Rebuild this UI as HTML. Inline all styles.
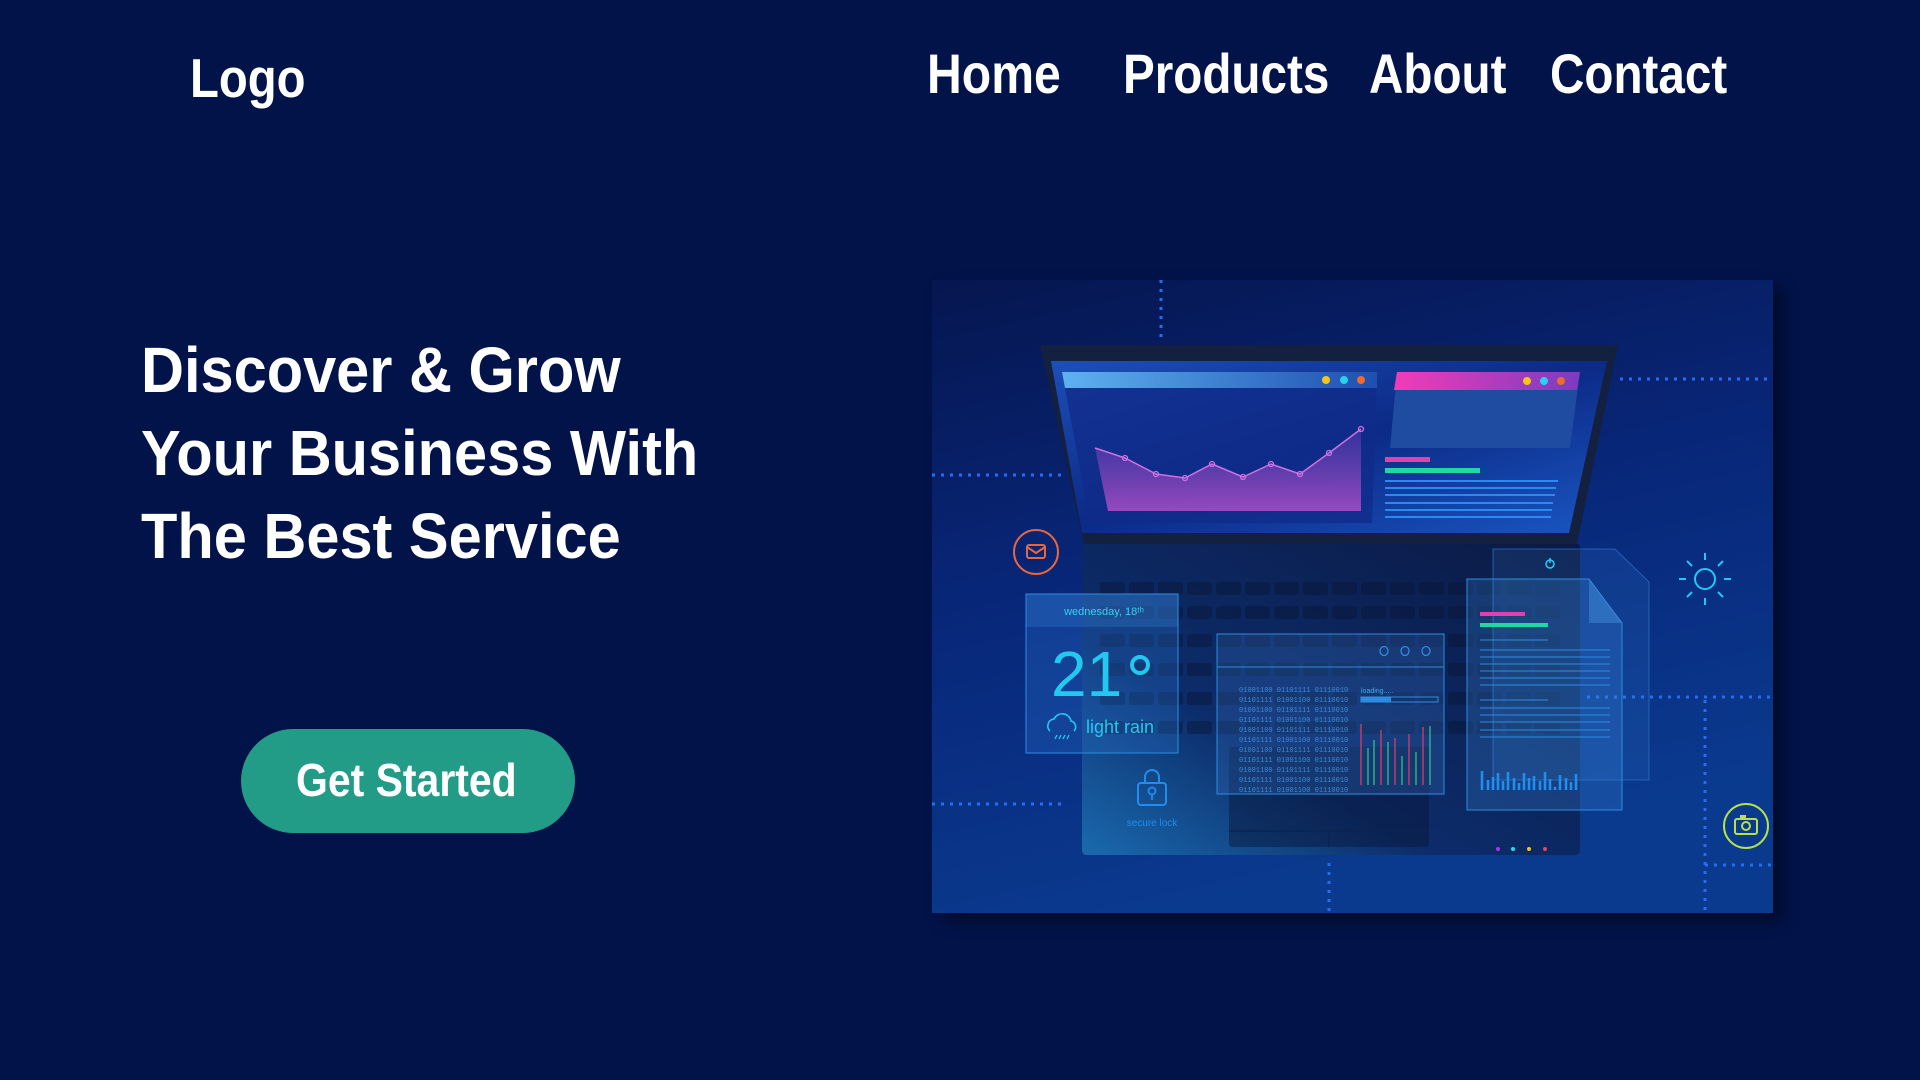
<!DOCTYPE html>
<html><head><meta charset="utf-8"><style>
html,body{margin:0;padding:0;width:1920px;height:1080px;overflow:hidden;background:#02134a;font-family:"Liberation Sans",sans-serif;color:#fff}
.t{position:absolute;white-space:nowrap;font-weight:bold;line-height:1;transform-origin:0 0}
.btn{position:absolute;left:241px;top:729px;width:334px;height:104px;border-radius:52px;background:#239c87}
</style></head><body>
<div class="t" style="left:190px;top:51px;font-size:55px;transform:scaleX(.86)">Logo</div>
<div class="t" style="left:927px;top:46px;font-size:56px;transform:scaleX(.86)">Home</div>
<div class="t" style="left:1123px;top:46px;font-size:56px;transform:scaleX(.85)">Products</div>
<div class="t" style="left:1369px;top:46px;font-size:56px;transform:scaleX(.85)">About</div>
<div class="t" style="left:1550px;top:46px;font-size:56px;transform:scaleX(.85)">Contact</div>
<div class="t" style="left:141px;top:338px;font-size:64px;transform:scaleX(.93)">Discover &amp; Grow</div>
<div class="t" style="left:141px;top:421px;font-size:64px;transform:scaleX(.93)">Your Business With</div>
<div class="t" style="left:141px;top:504px;font-size:64px;transform:scaleX(.93)">The Best Service</div>
<div class="btn"></div>
<div class="t" style="left:296px;top:757px;font-size:46px;transform:scaleX(.89)">Get Started</div>

<svg style="position:absolute;left:932px;top:280px;filter:drop-shadow(10px 8px 8px rgba(0,0,0,.45))" width="841" height="633" viewBox="0 0 841 633" font-family="Liberation Sans, sans-serif">
<defs>
<linearGradient id="bg" x1="0" y1="0" x2="0.3" y2="1"><stop offset="0" stop-color="#061650"/><stop offset=".5" stop-color="#08277a"/><stop offset="1" stop-color="#0a3a8e"/></linearGradient>
<linearGradient id="scr" x1="0" y1="0" x2="1" y2="1"><stop offset="0" stop-color="#1d4fb8"/><stop offset=".5" stop-color="#0c2a86"/><stop offset="1" stop-color="#1a56c2"/></linearGradient>
<linearGradient id="chart" x1="0" y1="0" x2="0" y2="1"><stop offset="0" stop-color="#5a3cb0" stop-opacity=".5"/><stop offset="1" stop-color="#b04ec8" stop-opacity=".85"/></linearGradient>
<linearGradient id="base" x1="0" y1="1" x2="1" y2="0"><stop offset="0" stop-color="#1a6aae"/><stop offset=".35" stop-color="#0c2c6a"/><stop offset="1" stop-color="#0b1a45"/></linearGradient>
<linearGradient id="hd1" x1="0" y1="0" x2="1" y2="0"><stop offset="0" stop-color="#5eb2f0"/><stop offset="1" stop-color="#1f4fb0"/></linearGradient>
<linearGradient id="hd2" x1="0" y1="0" x2="1" y2="0"><stop offset="0" stop-color="#f23cb8"/><stop offset="1" stop-color="#7a3cc0"/></linearGradient>
</defs>
<rect width="841" height="633" fill="url(#bg)"/>
<g stroke="#2a6cf0" stroke-width="3" stroke-dasharray="3 6" fill="none">
<path d="M688 99H841M0 195H135M655 417H841M0 524H135M773 585H841M229 0V63M773 420V633M397 583V633"/>
</g>
<path d="M108 65H686L645 264H152Z" fill="#142040"/>
<path d="M119 81H675L637 253H150Z" fill="url(#scr)"/>
<path d="M130 92H445L440 243H158Z" fill="#102c8a" opacity=".8"/>
<path d="M130 92H445V108H133Z" fill="url(#hd1)"/>
<circle cx="394" cy="100" r="4" fill="#f5c518"/><circle cx="412" cy="100" r="4" fill="#2ad0f0"/><circle cx="429" cy="100" r="4" fill="#f06a2a"/>
<path d="M163 168L193 178L224 194L253 198L280 184L311 197L339 184L368 194L397 173L429 149V231H176Z" fill="url(#chart)"/>
<polyline points="163,168 193,178 224,194 253,198 280,184 311,197 339,184 368,194 397,173 429,149" fill="none" stroke="#d070e0" stroke-width="1.5"/>
<g fill="none" stroke="#d070e0" stroke-width="1.3"><circle cx="193" cy="178" r="2.5"/><circle cx="224" cy="194" r="2.5"/><circle cx="253" cy="198" r="2.5"/><circle cx="280" cy="184" r="2.5"/><circle cx="311" cy="197" r="2.5"/><circle cx="339" cy="184" r="2.5"/><circle cx="368" cy="194" r="2.5"/><circle cx="397" cy="173" r="2.5"/><circle cx="429" cy="149" r="2.5"/></g>
<path d="M465 92H648L638 168H458Z" fill="#1f4ba0"/>
<path d="M465 92H648L645 110H462Z" fill="url(#hd2)"/>
<circle cx="595" cy="101" r="4" fill="#f5c518"/><circle cx="612" cy="101" r="4" fill="#2ad0f0"/><circle cx="629" cy="101" r="4" fill="#f06a2a"/>
<rect x="453" y="177" width="45" height="5" fill="#e040b0"/><rect x="453" y="188" width="95" height="5" fill="#20d8a0"/>
<g stroke="#2a8af0" stroke-width="2"><path d="M453 201H626M453 208H624M453 215H623M453 223H621M453 230H620M453 237H619"/></g>
<path d="M152 264H645Q648 264 648 268V570Q648 575 643 575H155Q150 575 150 570V268Z" fill="url(#base)"/>
<g fill="#081636" opacity=".45">
<g id="row"><rect x="168" y="302" width="25" height="13" rx="3"/><rect x="197" y="302" width="25" height="13" rx="3"/><rect x="226" y="302" width="25" height="13" rx="3"/><rect x="255" y="302" width="25" height="13" rx="3"/><rect x="284" y="302" width="25" height="13" rx="3"/><rect x="313" y="302" width="25" height="13" rx="3"/><rect x="342" y="302" width="25" height="13" rx="3"/><rect x="371" y="302" width="25" height="13" rx="3"/><rect x="400" y="302" width="25" height="13" rx="3"/><rect x="429" y="302" width="25" height="13" rx="3"/><rect x="458" y="302" width="25" height="13" rx="3"/><rect x="487" y="302" width="25" height="13" rx="3"/><rect x="516" y="302" width="25" height="13" rx="3"/><rect x="545" y="302" width="25" height="13" rx="3"/><rect x="574" y="302" width="25" height="13" rx="3"/><rect x="603" y="302" width="25" height="13" rx="3"/></g>
<use href="#row" y="24"/><use href="#row" y="52"/><use href="#row" y="81"/><use href="#row" y="110"/><use href="#row" y="139"/>
<rect x="297" y="467" width="200" height="100" rx="3"/>
</g>
<path d="M297 551H497M397 551V567" stroke="#0d2350" stroke-width="1.5"/>
<circle cx="566" cy="569" r="2" fill="#b030f0"/><circle cx="581" cy="569" r="2" fill="#20e0e0"/><circle cx="597" cy="569" r="2" fill="#f5c518"/><circle cx="613" cy="569" r="2" fill="#f04060"/>
<rect x="94" y="314" width="152" height="159" fill="#2a7ad8" fill-opacity=".28" stroke="#2d8ce0" stroke-width="1"/>
<rect x="94" y="314" width="152" height="33" fill="#3a8ae0" fill-opacity=".25"/>
<text x="172" y="335" font-size="11" fill="#3ad0f0" text-anchor="middle">wednesday, 18ᵗʰ</text>
<text x="119" y="416" font-size="64" fill="#23c8f0">21</text>
<circle cx="208" cy="385" r="8" fill="none" stroke="#23c8f0" stroke-width="4"/>
<path d="M118 451a7 7 0 0 1 4-12a9 9 0 0 1 17 2a6 6 0 0 1 3 10" fill="none" stroke="#23c8f0" stroke-width="1.6"/>
<path d="M125 455l-2 4M129 455l-2 4M133 455l-2 4M137 455l-2 4" stroke="#23c8f0" stroke-width="1.3"/>
<text x="154" y="453" font-size="18" fill="#23c8f0">light rain</text>
<circle cx="104" cy="272" r="22" fill="none" stroke="#e8663d" stroke-width="2"/>
<rect x="95" y="265" width="18" height="13" rx="2" fill="none" stroke="#e8663d" stroke-width="2"/><path d="M95 267l9 6l9-6" fill="none" stroke="#e8663d" stroke-width="2"/>
<path d="M213 503v-6a7 7 0 0 1 14 0v6" fill="none" stroke="#1f8ef0" stroke-width="2"/>
<rect x="206" y="503" width="28" height="22" rx="3" fill="none" stroke="#1f8ef0" stroke-width="2"/>
<circle cx="220" cy="511" r="3.5" fill="none" stroke="#1f8ef0" stroke-width="1.8"/><path d="M220 514v6" stroke="#1f8ef0" stroke-width="1.8"/>
<text x="220" y="546" font-size="10" fill="#1f8ef0" text-anchor="middle">secure lock</text>
<rect x="285" y="354" width="227" height="160" fill="#3a7ad0" fill-opacity=".25" stroke="#2d8ce0"/>
<path d="M285 387H512" stroke="#2d8ce0"/>
<g fill="none" stroke="#2d8ce0" stroke-width="1.3"><ellipse cx="452" cy="371" rx="4" ry="4.5"/><ellipse cx="473" cy="371" rx="4" ry="4.5"/><ellipse cx="494" cy="371" rx="4" ry="4.5"/></g>
<g font-size="7" fill="#3b8ad8" font-family="Liberation Mono, monospace">
<text x="307" y="412">01001100 01101111 01110010</text><text x="307" y="422">01101111 01001100 01110010</text><text x="307" y="432">01001100 01101111 01110010</text><text x="307" y="442">01101111 01001100 01110010</text><text x="307" y="452">01001100 01101111 01110010</text><text x="307" y="462">01101111 01001100 01110010</text><text x="307" y="472">01001100 01101111 01110010</text><text x="307" y="482">01101111 01001100 01110010</text><text x="307" y="492">01001100 01101111 01110010</text><text x="307" y="502">01101111 01001100 01110010</text><text x="307" y="512">01101111 01001100 01110010</text>
</g>
<text x="429" y="413" font-size="7" fill="#3bb0e8">loading.....</text>
<rect x="429" y="417" width="77" height="5" fill="none" stroke="#2d8ce0"/><rect x="429" y="417" width="30" height="5" fill="#2d8ce0"/>
<g stroke-width="1.3"><path d="M429 444V505M449 450V505M463 458V505M477 454V505M491 447V505" stroke="#d0406a"/><path d="M436 468V505M442 460V505M456 462V505M470 476V505M484 472V505M498 446V505" stroke="#30c090"/></g>
<path d="M561 269H683L717 302V500H561Z" fill="#3a8ae0" fill-opacity=".15" stroke="#2d6cc0" stroke-width=".8"/>
<path d="M535 299H657L690 343V530H535Z" fill="#3a8ae0" fill-opacity=".25" stroke="#2d8ce0"/>
<path d="M657 299V343H690Z" fill="#4a9ae8" fill-opacity=".4"/>
<circle cx="618" cy="284" r="4" fill="none" stroke="#23c8f0" stroke-width="1.6"/><path d="M618 278v5" stroke="#23c8f0" stroke-width="1.6"/>
<rect x="548" y="332" width="45" height="4" fill="#e040b0"/><rect x="548" y="343" width="68" height="4" fill="#20d8a0"/>
<g stroke="#2d8ce0" stroke-width=".9"><path d="M548 360H616M548 370H678M548 377H678M548 384H678M548 391H678M548 398H678M548 405H678M548 420H616M548 428H678M548 435H678M548 442H678M548 450H678M548 457H678"/></g>
<g stroke="#1f8ef0" stroke-width="2.6"><path d="M550 510V491M556 510V500M561 510V497M566 510V493M571 510V501M576 510V492M582 510V498M587 510V503M592 510V493M597 510V498M602 510V496M608 510V501M613 510V492M618 510V499M623 510V507M628 510V495M634 510V498M639 510V502M644 510V494"/></g>
<g stroke="#23c8f0" stroke-width="2" fill="none"><circle cx="773" cy="299" r="10"/><path d="M773 280v-7M773 318v7M754 299h-7M792 299h7M760 286l-5-5M786 286l5-5M760 312l-5 5M786 312l5 5"/></g>
<circle cx="814" cy="546" r="22" fill="none" stroke="#b5e24a" stroke-width="2"/>
<rect x="803" y="539" width="22" height="15" rx="2" fill="none" stroke="#b5e24a" stroke-width="2"/><circle cx="814" cy="546" r="4" fill="none" stroke="#b5e24a" stroke-width="2"/><rect x="808" y="535" width="6" height="4" fill="#b5e24a"/>
</svg>
</body></html>
